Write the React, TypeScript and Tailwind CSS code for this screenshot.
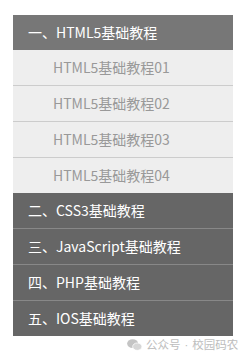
const subItems = ["HTML5基础教程01", "HTML5基础教程02", "HTML5基础教程03", "HTML5基础教程04"];
const others = ["二、CSS3基础教程", "三、JavaScript基础教程", "四、PHP基础教程", "五、IOS基础教程"];

const WeChat = () => (
  <svg width="15" height="12" viewBox="0 0 16 13" fill="#c4c4c4">
    <ellipse cx="6" cy="5" rx="6" ry="4.8" />
    <ellipse cx="11" cy="8.3" rx="5" ry="4" fill="#d6d6d6" stroke="#fff" strokeWidth="0.8" />
  </svg>
);

export default function App() {
  return (
    <div className="relative h-[355px] w-[248px] overflow-hidden bg-white pt-[15px] font-['Noto_Sans_CJK_SC','Noto_Sans',sans-serif]">
      <ul className="mx-[13px] w-[220px] text-[14px]">
        <li className="flex h-[35px] items-center bg-[#777777] pl-[15px] text-white">一、HTML5基础教程</li>
        {subItems.map((s, i) => (
          <li
            key={s}
            className={`flex items-center bg-[#eeeeee] pl-[40px] text-[#999999] ${i === 0 ? "h-[35px]" : "h-[36px] border-t border-[#cccccc]"}`}
          >
            {s}
          </li>
        ))}
        {others.map((s, i) => (
          <li
            key={s}
            className={`flex items-center bg-[#666666] pl-[15px] text-white ${i === 0 ? "h-[35px]" : "h-[36px] border-t border-[#888888]"}`}
          >
            {s}
          </li>
        ))}
      </ul>
      <div className="absolute left-[127px] top-[336px] flex items-center gap-[4px] whitespace-nowrap text-[11.5px] leading-[16px] text-[#bdbdbd]">
        <WeChat />
        <span>
          公众号<span className="mx-[4px] font-['Liberation_Sans']">·</span>校园码农
        </span>
      </div>
    </div>
  );
}
